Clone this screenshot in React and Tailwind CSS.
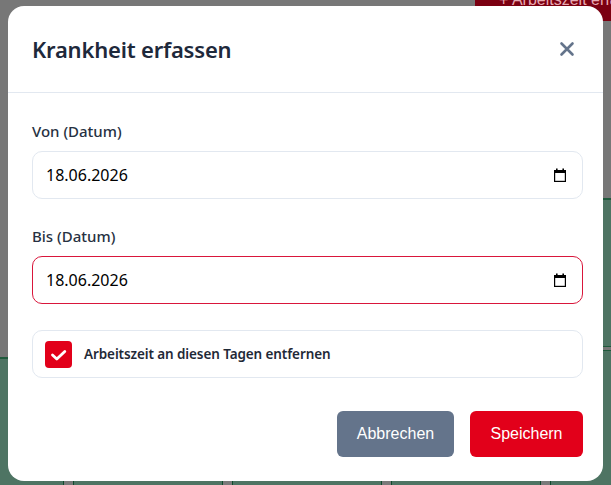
import React, { useState } from "react";

const CalendarIcon = () => (
  <svg width="14" height="14" viewBox="0 0 14 14" className="shrink-0">
    <rect x="3" y="0.5" width="1.6" height="2" fill="#000" />
    <rect x="9.4" y="0.5" width="1.6" height="2" fill="#000" />
    <rect x="1" y="2" width="12" height="3" fill="#000" />
    <rect x="1.6" y="2.6" width="10.8" height="10.8" fill="none" stroke="#000" strokeWidth="1.2" />
  </svg>
);

const CloseIcon = () => (
  <svg width="16" height="16" viewBox="0 0 16 16">
    <path d="M2.5 2.5 13.5 13.5 M13.5 2.5 2.5 13.5" stroke="#64748b" strokeWidth="2.6" strokeLinecap="round" />
  </svg>
);

const DateField = ({ label, value, invalid }) => (
  <div>
    <label className="block text-[15px] leading-6 font-medium text-[#273142] mb-2">
      {label}
    </label>
    <div
      className={`flex items-center justify-between h-12 pl-[13px] pr-[15px] rounded-[10px] border bg-white ${
        invalid ? "border-[#d9163b]" : "border-[#e2e8f0]"
      }`}
    >
      <span className="text-[16px] text-black">{value}</span>
      <CalendarIcon />
    </div>
  </div>
);

const Backdrop = () => (
  <div className="absolute inset-0 overflow-hidden bg-[#777777]">
    {/* page underneath the overlay */}
    <div className="absolute left-0 right-0 top-[357px] bottom-0 bg-[#4e7463] border-t-2 border-[#1f5a3c]" />
    <div className="absolute left-[560px] right-0 top-[198px] bottom-0 bg-[#4e7463] border-t-2 border-[#1f5a3c]" />
    <div className="absolute left-[560px] right-0 top-[346px] h-[5px] bg-[#777777] border-y border-[#1f5a3c]" />
    <div className="absolute left-[475px] top-[-15px] h-[36px] w-[200px] bg-[#7b0011] pl-6 text-[16px] leading-[30px] text-[#e8aab3] font-['Liberation_Sans',Arial,sans-serif]">
      + Arbeitszeit erfassen
    </div>
    {[63, 222, 381, 540].map((x) => (
      <div
        key={x}
        style={{ left: x }}
        className="absolute bottom-0 h-[8px] w-[11px] bg-[#7a7a7a] border-x border-[#0f4a2c]"
      />
    ))}
  </div>
);

export default function App() {
  const [removeWork, setRemoveWork] = useState(true);

  return (
    <div className="relative w-[611px] h-[485px] overflow-hidden font-['Noto_Sans',sans-serif]">
      <Backdrop />
      <div className="relative pl-2 pt-[6px]">
        <div className="w-[595px] h-[475px] bg-white rounded-2xl flex flex-col">
          <div className="h-[87px] flex items-center justify-between pl-6 pr-[26px] border-b border-[#e2e8f0]">
            <h2 className="text-[22px] font-semibold text-[#1e293b] tracking-[-0.2px]">
              Krankheit erfassen
            </h2>
            <button className="p-0.5">
              <CloseIcon />
            </button>
          </div>

          <div className="pl-6 pr-5 pt-[26px] pb-6 flex flex-col">
            <DateField label="Von (Datum)" value="18.06.2026" />
            <div className="mt-[25px]">
              <DateField label="Bis (Datum)" value="18.06.2026" invalid />
            </div>

            <label className="mt-[26px] h-12 flex items-center gap-3 pl-[12px] rounded-[10px] border border-[#e2e8f0] cursor-pointer">
              <span
                onClick={() => setRemoveWork(!removeWork)}
                className="w-[27px] h-[27px] rounded-[4px] bg-[#e2001a] flex items-center justify-center"
              >
                {removeWork && (
                  <svg width="27" height="27" viewBox="0 0 27 27">
                    <path d="M7.5 14 11.8 18 19.8 10.5" fill="none" stroke="#fff" strokeWidth="2.8" strokeLinecap="round" strokeLinejoin="round" />
                  </svg>
                )}
              </span>
              <span className="text-[13.5px] font-semibold text-[#1f2937] tracking-[-0.1px]">
                Arbeitszeit an diesen Tagen entfernen
              </span>
            </label>

            <div className="mt-[33px] flex justify-end gap-4 font-['Liberation_Sans',Arial,sans-serif]">
              <button className="h-[46px] w-[117px] rounded-md bg-[#64748b] text-white text-[16px]">
                Abbrechen
              </button>
              <button className="h-[46px] w-[113px] rounded-md bg-[#e2001a] text-white text-[16px]">
                Speichern
              </button>
            </div>
          </div>
        </div>
      </div>
    </div>
  );
}
